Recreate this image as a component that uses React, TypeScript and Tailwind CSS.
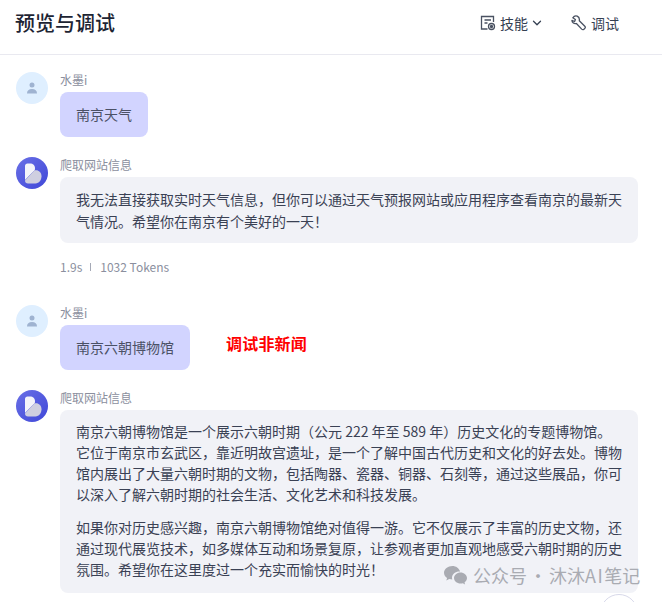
import React from "react"
import { ChevronDown } from "lucide-react"

const cjk = { fontFamily: '"Noto Sans CJK SC", sans-serif' }

const UserAvatar = () => (
  <div className="w-8 h-8 mt-px rounded-full bg-[#dfefff] flex items-center justify-center shrink-0">
    <svg width="12" height="12" viewBox="0 0 12 12" fill="#9fb3d1">
      <circle cx="6" cy="3" r="2.500" />
      <path d="M1 11.500c0-3 1.800-4.600 5-4.600s5 1.600 5 4.600z" />
    </svg>
  </div>
)

const BotAvatar = () => (
  <div className="w-8 h-8 mt-px rounded-full bg-[linear-gradient(135deg,#6a70e6,#3f47d8)] flex items-center justify-center shrink-0">
    <svg width="18" height="21" viewBox="0 0 18 21" className="ml-[1px]">
      <path d="M1 3C1 1.400 2 .5 3.500.5h2.500C9 .5 11 2.500 11 5.200c0 .8-.2 1.500-.5 2.100L1 17z" fill="#f4f4fa" />
      <path d="M1 17.500L10.500 7.300h1.500c3 0 5.500 2.500 5.500 6 0 3.700-2.500 7.200-6 7.200H4c-1.800 0-3-1.200-3-3z" fill="#cfcfe0" />
    </svg>
  </div>
)

const Message = ({ name, avatar, children }: { name: string; avatar: React.ReactNode; children: React.ReactNode }) => (
  <div className="flex gap-3">
    {avatar}
    <div className="flex-1 min-w-0">
      <div className="text-[12px] leading-[18px] text-[#8b8f9e] mb-[3px]">{name}</div>
      {children}
    </div>
  </div>
)

const App = () => {
  return (
    <div className="relative w-[662px] h-[602px] overflow-hidden bg-white" style={cjk}>
      <div className="h-[55px] flex items-center justify-between pl-[15px] pr-[43px] pb-[8px] border-b border-[#e9e9f0]">
        <h1 className="text-[20px] font-medium text-[#1d2433]">预览与调试</h1>
        <div className="flex items-center gap-[27px] text-[14px] text-[#354052]">
          <div className="flex items-center gap-1">
            <svg width="16" height="16" viewBox="0 0 16 16" fill="none" stroke="#4a5262" strokeWidth="1.300">
              <path d="M7.500 14H1.500V1.500h12V7" />
              <path d="M4.500 5h6.500M4.500 8h3" />
              <circle cx="11.500" cy="11.500" r="3" />
              <circle cx="11.500" cy="11.500" r="1" fill="#4a5262" />
            </svg>
            <span>技能</span>
            <ChevronDown size={14} strokeWidth={2.200} className="-ml-[2px]" />
          </div>
          <div className="flex items-center gap-1">
            <svg width="16" height="16" viewBox="0 0 16 16" fill="none" stroke="#4a5262" strokeWidth="1.300" strokeLinejoin="round">
              <path d="M6.200 1.200C4.500.6 2.800 1.300 1.800 2.800l2.600 1.700-.8 2-2.700-1.100c.2 2.300 2.200 3.800 4.500 3.100l5.300 5.600c.7.700 1.500.7 2.200.1l1-1c.6-.7.500-1.400-.1-2L8.300 5.800c.4-2-.6-3.900-2.100-4.600z" />
            </svg>
            <span>调试</span>
          </div>
        </div>
      </div>

      <div className="pl-4 pr-6 pt-[16px]">
        <Message name="水墨i" avatar={<UserAvatar />}>
          <div className="inline-block rounded-lg bg-[#d2d4ff] px-4 py-3 text-[14px] leading-[21px] text-[#4b5166]">南京天气</div>
        </Message>

        <div className="mt-[19px]">
          <Message name="爬取网站信息" avatar={<BotAvatar />}>
            <div className="rounded-lg bg-[#f1f2f7] px-4 py-[11px] text-[14px] leading-[22px] text-[#3a4154]">
              我无法直接获取实时天气信息，但你可以通过天气预报网站或应用程序查看南京的最新天气情况。希望你在南京有个美好的一天！
            </div>
            <div className="mt-[15px] flex items-center text-[12px] leading-[18px] text-[#8b8f9e]">
              <span>1.9s</span>
              <span className="ml-2 mr-[9px] h-[8px] w-px bg-[#a5a9b6]" />
              <span>1032 Tokens</span>
            </div>
          </Message>
        </div>

        <div className="mt-[28px]">
          <Message name="水墨i" avatar={<UserAvatar />}>
            <div className="inline-block rounded-lg bg-[#d2d4ff] px-4 py-3 text-[14px] leading-[21px] text-[#4b5166]">南京六朝博物馆</div>
          </Message>
        </div>

        <div className="mt-[19px]">
          <Message name="爬取网站信息" avatar={<BotAvatar />}>
            <div className="rounded-lg bg-[#f1f2f7] px-4 pt-[11px] pb-[13px] text-[14px] leading-[21px] text-[#3a4154]">
              <p>南京六朝博物馆是一个展示六朝时期（公元 222 年至 589 年）历史文化的专题博物馆。它位于南京市玄武区，靠近明故宫遗址，是一个了解中国古代历史和文化的好去处。博物馆内展出了大量六朝时期的文物，包括陶器、瓷器、铜器、石刻等，通过这些展品，你可以深入了解六朝时期的社会生活、文化艺术和科技发展。</p>
              <p className="mt-[12px]">如果你对历史感兴趣，南京六朝博物馆绝对值得一游。它不仅展示了丰富的历史文物，还通过现代展览技术，如多媒体互动和场景复原，让参观者更加直观地感受六朝时期的历史氛围。希望你在这里度过一个充实而愉快的时光！</p>
            </div>
          </Message>
        </div>
      </div>

      {/* 截图上的红字标注 */}
      <span className="absolute left-[226px] top-[331px] text-[16px] leading-[24px] font-bold tracking-[0.2px] text-[#ff0000]">调试非新闻</span>

      {/* 公众号水印 */}
      <div className="absolute left-[443px] top-[562px] flex items-center gap-[5px] text-[18px] leading-[26px] text-[#a9abb2]">
        <svg width="25" height="21" viewBox="0 0 25 21" fill="#a9abb2">
          <path d="M9.500 1C4.800 1 1 4 1 7.800c0 2.200 1.200 4 3.100 5.300l-.8 2.400 2.900-1.500c1 .3 2 .4 3.100.4-.2-.6-.3-1.200-.3-1.800 0-3.500 3.300-6.200 7.500-6.200h.6C15.900 3.200 13 1 9.500 1z" />
          <path d="M24 13c0-3-3-5.500-6.500-5.500S11 10 11 13s3 5.500 6.500 5.500c.8 0 1.600-.1 2.300-.3l2.300 1.200-.6-2c1.500-1.100 2.500-2.700 2.500-4.400z" />
        </svg>
        <span className="[word-spacing:-2px]">公众号 · 沐沐<span className="tracking-[1.5px]">AI</span>笔记</span>
      </div>

      <div className="absolute left-[600px] top-[594px] w-[38px] h-[38px] rounded-full bg-white border border-[#d8d9ea]" />
    </div>
  )
}

export default App
